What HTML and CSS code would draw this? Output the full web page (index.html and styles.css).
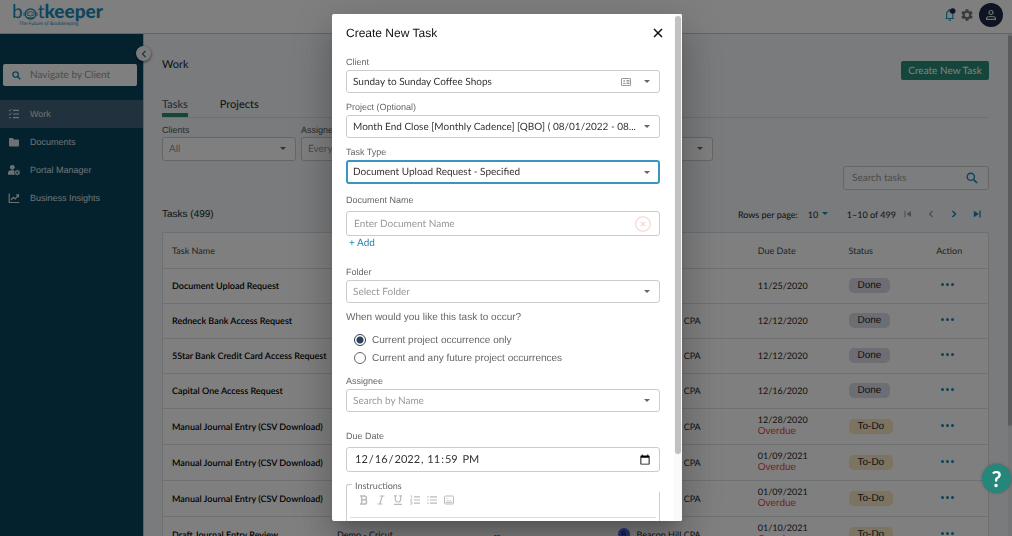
FILE: index.html
```html
<!DOCTYPE html>
<html lang="en">
<head>
<meta charset="utf-8">
<title>Botkeeper - Work</title>
<link rel="stylesheet" href="styles.css">
</head>
<body>
<div class="app">
  <header class="topbar">
    <a class="logo" href="#">
      <span class="logo-word"><span class="logo-thin">b</span><svg class="logo-bot" viewBox="0 0 15 12"><ellipse cx="7.500" cy="6" rx="5.400" ry="5" fill="none" stroke="currentColor" stroke-width="1.300"/><path d="M1 4.500v3.500M14 4.500v3.500M4 4.500q3.500-2 7 0v2.500q-3.500 2-7 0z" fill="none" stroke="currentColor" stroke-width=".9"/><path d="M5.500 5.800h1M8.500 5.800h1M4.500 9.500q3 1 6 0" stroke="currentColor" stroke-width="1" fill="none"/></svg><span class="logo-thin">t</span><span class="logo-bold">keeper</span></span>
      <span class="logo-tag">The Future of Bookkeeping</span>
    </a>
    <div class="top-actions">
      <button class="icon-btn bell" aria-label="Notifications"><svg viewBox="0 0 12 14" width="12" height="14"><path d="M1.500 10.500h8.500M2.600 10.300V6.300a3.100 3.400 0 0 1 6.200 0v4M4.800 2.700v-.8h1.700M4.600 12.200h2.300" fill="none" stroke="#1fa0bd" stroke-width="1.200"/><circle cx="8.700" cy="3" r="2.800" fill="#1f2a4a"/></svg></button>
      <button class="icon-btn" aria-label="Settings"><svg viewBox="2 2 20 20" width="12" height="12"><path fill="#777" d="M19.140 12.940c.04-.3.060-.610.060-.940s-.020-.640-.070-.940l2.030-1.580a.49.49 0 0 0 .12-.610l-1.920-3.320a.49.49 0 0 0-.590-.220l-2.390.960a7 7 0 0 0-1.620-.940l-.360-2.540a.48.48 0 0 0-.480-.410h-3.840a.48.48 0 0 0-.470.410l-.360 2.540a7.300 7.300 0 0 0-1.620.940l-2.390-.960a.48.48 0 0 0-.590.220L2.740 8.870a.48.48 0 0 0 .12.610l2.030 1.580a6 6 0 0 0 0 1.880l-2.030 1.580a.49.49 0 0 0-.12.610l1.920 3.320c.12.220.37.290.59.220l2.390-.960c.5.380 1.030.700 1.620.940l.36 2.540c.05.240.24.410.48.410h3.840c.24 0 .44-.170.47-.410l.36-2.540a7 7 0 0 0 1.620-.940l2.390.960c.22.080.47 0 .59-.220l1.920-3.320a.48.48 0 0 0-.12-.610zM12 15.600a3.600 3.600 0 1 1 0-7.200 3.600 3.600 0 0 1 0 7.200z"/></svg></button>
      <button class="avatar" aria-label="Account"><svg viewBox="0 0 12 12" width="12" height="12" fill="none" stroke="#dfe3ea" stroke-width="1.200"><circle cx="6" cy="3.500" r="2"/><path d="M1.600 10.400V9.200C1.600 6.900 10.400 6.900 10.400 9.200v1.200z"/></svg></button>
    </div>
  </header>
  <div class="layout">
    <nav class="sidebar">
      <button class="collapse" aria-label="Collapse menu"><svg viewBox="0 0 8 8" width="8" height="8"><path d="M5.500 1 2.500 4l3 3" fill="none" stroke="#1b6f96" stroke-width="1.200"/></svg></button>
      <label class="client-search">
        <svg viewBox="0 0 10 10" width="9" height="9"><circle cx="4" cy="4" r="3" fill="none" stroke="#1b85b8" stroke-width="1.400"/><path d="m6.200 6.200 3 3" stroke="#1b85b8" stroke-width="1.700"/></svg>
        <input type="text" placeholder="Navigate by Client" aria-label="Navigate by Client">
      </label>
      <a class="nav-item active" href="#"><svg viewBox="0 0 12 12"><path d="M5 2.300h6M5 6h6M5 9.700h6" stroke="currentColor" stroke-width="1.200"/><path d="m.8 2.200 1 1L3.500 1M.8 5.900l1 1 1.700-2.200" fill="none" stroke="currentColor" stroke-width=".9"/><circle cx="2" cy="9.700" r=".8" fill="currentColor"/></svg>Work</a>
      <a class="nav-item" href="#"><svg viewBox="0 0 12 12"><path d="M1 3a1 1 0 0 1 1-1h2.800l1.300 1.400H10a1 1 0 0 1 1 1V9.500a1 1 0 0 1-1 1H2a1 1 0 0 1-1-1z" fill="currentColor"/></svg>Documents</a>
      <a class="nav-item" href="#"><svg viewBox="0 0 12 12"><circle cx="4.300" cy="3.300" r="2.400" fill="currentColor"/><path d="M0 10.800V9.200c0-2 1.500-2.900 3-2.900h2.300c.6 0 1 .2 1.300.4-.8 1.500-.4 3.100.8 4.100z" fill="currentColor"/><circle cx="9.300" cy="8.500" r="1.700" fill="none" stroke="currentColor" stroke-width="1.300"/><path d="M9.300 5.700v1M9.300 10.300v1M6.900 7.100l.8.500M10.900 9.400l.8.500M6.900 9.900l.8-.5M10.900 7.600l.8-.5" stroke="currentColor"/></svg>Portal Manager</a>
      <a class="nav-item" href="#"><svg viewBox="0 0 12 12"><path d="M1.200 1.500v9h10M3 8l2.300-2.600 1.900 1.500 3-3.600M8.200 2.900h2.300v2.300" fill="none" stroke="currentColor" stroke-width="1.200"/></svg>Business Insights</a>
    </nav>
    <main class="main">
      <div class="page-head"><h1>Work</h1><button class="primary">Create New Task</button></div>
      <div class="tabs"><a class="tab current" href="#">Tasks</a><a class="tab" href="#">Projects</a></div>
      <div class="filters">
        <div class="filter"><label for="f1">Clients</label><div class="select"><select id="f1" class="muted"><option>All</option></select></div></div>
        <div class="filter"><label for="f2">Assignee</label><div class="select"><select id="f2" class="muted"><option>Everyone</option></select></div></div>
        <div class="filter"><label for="f3">Status</label><div class="select"><select id="f3" class="muted"><option>All</option></select></div></div>
        <div class="filter"><label for="f4">Type</label><div class="select"><select id="f4" class="muted"><option>All</option></select></div></div>
      </div>
      <label class="task-search"><input type="text" placeholder="Search tasks" aria-label="Search tasks"><svg viewBox="0 0 12 12" width="12" height="12"><circle cx="4.800" cy="4.800" r="3.600" fill="none" stroke="#1b85b8" stroke-width="1.400"/><path d="m7.500 7.500 3.500 3.500" stroke="#1b85b8" stroke-width="1.700"/></svg></label>
      <div class="list-head">
        <h2>Tasks (499)</h2>
        <div class="pager">
          <label for="rows">Rows per page:</label>
          <div class="select rows"><select id="rows"><option>10</option></select></div>
          <span class="range">1–10 of 499</span>
          <button class="page-btn off" aria-label="First page"><svg viewBox="0 0 8 8"><path d="M1 .8v6.400" stroke="currentColor"/><path d="M7 1v6L2.500 4z" fill="currentColor"/></svg></button>
          <button class="page-btn off" aria-label="Previous page"><svg viewBox="0 0 8 8"><path d="M5.500 1 2.500 4l3 3" fill="none" stroke="currentColor" stroke-width="1.100"/></svg></button>
          <button class="page-btn" aria-label="Next page"><svg viewBox="0 0 8 8"><path d="m2.500 1 3 3-3 3" fill="none" stroke="currentColor" stroke-width="1.500"/></svg></button>
          <button class="page-btn" aria-label="Last page"><svg viewBox="0 0 8 8"><path d="M7 .6v6.800" stroke="currentColor" stroke-width="1.300"/><path d="M.8.7v6.600L6 4z" fill="currentColor"/></svg></button>
        </div>
      </div>
      <div class="table-card">
      <table>
        <colgroup><col class="c-name"><col class="c-client"><col class="c-project"><col class="c-who"><col class="c-due"><col class="c-status"><col class="c-action"></colgroup>
        <thead><tr><th>Task Name</th><th>Client</th><th>Project</th><th>Assignee</th><th>Due Date</th><th>Status</th><th>Action</th></tr></thead>
        <tbody>
        <tr><td class="name">Document Upload Request</td><td></td><td></td><td></td><td>11/25/2020</td><td><span class="chip">Done</span></td><td><button class="more" aria-label="Actions"><i></i><i></i><i></i></button></td></tr>
        <tr><td class="name">Redneck Bank Access Request</td><td></td><td></td><td><span class="who"><b>B</b>Beacon Hill CPA</span></td><td>12/12/2020</td><td><span class="chip">Done</span></td><td><button class="more" aria-label="Actions"><i></i><i></i><i></i></button></td></tr>
        <tr><td class="name">5Star Bank Credit Card Access Request</td><td></td><td></td><td><span class="who"><b>B</b>Beacon Hill CPA</span></td><td>12/12/2020</td><td><span class="chip">Done</span></td><td><button class="more" aria-label="Actions"><i></i><i></i><i></i></button></td></tr>
        <tr><td class="name">Capital One Access Request</td><td></td><td></td><td><span class="who"><b>B</b>Beacon Hill CPA</span></td><td>12/16/2020</td><td><span class="chip">Done</span></td><td><button class="more" aria-label="Actions"><i></i><i></i><i></i></button></td></tr>
        <tr class="late"><td class="name">Manual Journal Entry (CSV Download)</td><td></td><td></td><td><span class="who"><b>B</b>Beacon Hill CPA</span></td><td>12/28/2020<span class="overdue">Overdue</span></td><td><span class="chip todo">To-Do</span></td><td><button class="more" aria-label="Actions"><i></i><i></i><i></i></button></td></tr>
        <tr class="late"><td class="name">Manual Journal Entry (CSV Download)</td><td></td><td></td><td><span class="who"><b>B</b>Beacon Hill CPA</span></td><td>01/09/2021<span class="overdue">Overdue</span></td><td><span class="chip todo">To-Do</span></td><td><button class="more" aria-label="Actions"><i></i><i></i><i></i></button></td></tr>
        <tr class="late"><td class="name">Manual Journal Entry (CSV Download)</td><td></td><td></td><td><span class="who"><b>B</b>Beacon Hill CPA</span></td><td>01/09/2021<span class="overdue">Overdue</span></td><td><span class="chip todo">To-Do</span></td><td><button class="more" aria-label="Actions"><i></i><i></i><i></i></button></td></tr>
        <tr class="late"><td class="name">Draft Journal Entry Review</td><td>Demo - Cricut</td><td>--</td><td><span class="who"><b>B</b>Beacon Hill CPA</span></td><td>01/10/2021<span class="overdue">Overdue</span></td><td><span class="chip todo">To-Do</span></td><td><button class="more" aria-label="Actions"><i></i><i></i><i></i></button></td></tr>
        </tbody>
      </table>
      </div>
    </main>
    <div class="page-scroll"><div class="page-thumb"></div></div>
  </div>
</div>

<div class="backdrop">
  <section class="modal" role="dialog" aria-labelledby="dlg-title">
    <form class="modal-body">
      <div class="modal-head"><h2 id="dlg-title">Create New Task</h2><button type="button" class="close" aria-label="Close"><svg viewBox="0 0 10 10" width="10" height="10"><path d="m1 1 8 8M9 1 1 9" stroke="#111" stroke-width="1.500"/></svg></button></div>
      <div class="field"><label for="client">Client</label><div class="select"><select id="client"><option>Sunday to Sunday Coffee Shops</option></select><svg class="card-icon" viewBox="0 0 10 8" width="10" height="8" fill="none" stroke="#999"><rect x=".5" y=".5" width="9" height="7" rx=".5"/><path d="M5.500 2.500H8.500M5.500 4H8.500M5.500 5.500H8.500M2 5.500h2.500"/><circle cx="3.200" cy="3" r=".6"/></svg></div></div>
      <div class="field"><label for="project">Project (Optional)</label><div class="select"><select id="project"><option>Month End Close [Monthly Cadence] [QBO] ( 08/01/2022 - 08...</option></select></div></div>
      <div class="field"><label for="type">Task Type</label><div class="select focused"><select id="type"><option>Document Upload Request - Specified</option></select></div></div>
      <div class="field spaced doc"><label for="doc">Document Name</label>
        <div class="textbox"><input id="doc" type="text" placeholder="Enter Document Name"><button type="button" class="remove" aria-label="Remove"><svg viewBox="0 0 16 16" width="16" height="16" fill="none" stroke="#fbd0d0" stroke-width="1.100"><circle cx="8" cy="8" r="7.300"/><path d="m5.800 5.800 4.400 4.400M10.200 5.800l-4.400 4.400"/></svg></button></div>
      </div>
      <button type="button" class="add">+ Add</button>
      <div class="field folder"><label for="folder">Folder</label><div class="select"><select id="folder" class="muted"><option>Select Folder</option></select></div></div>
      <fieldset class="when">
        <legend>When would you like this task to occur?</legend>
        <label><input type="radio" name="when" checked>Current project occurrence only</label>
        <label><input type="radio" name="when">Current and any future project occurrences</label>
      </fieldset>
      <div class="field"><label for="assignee">Assignee</label><div class="select"><select id="assignee" class="muted"><option>Search by Name</option></select></div></div>
      <div class="field spaced due"><label for="due">Due Date</label><div class="textbox"><input id="due" type="datetime-local" value="2022-12-16T23:59"></div></div>
      <div class="editor">
        <div class="editor-top"><span class="corner"></span><span class="editor-label">Instructions</span></div>
        <div class="editor-body">
          <div class="tools">
            <button type="button" aria-label="Bold"><svg viewBox="0 0 10 10"><path d="M1 1h4.500a1.900 1.900 0 0 1 0 3.800H2.700M5.500 4.800a2.100 2.100 0 0 1 0 4.200H1M2.700 1v8" fill="none" stroke="currentColor" stroke-width="1.500"/></svg></button>
            <button type="button" aria-label="Italic"><svg viewBox="0 0 10 10"><path d="M3.500 1h5M1.500 9h5M6.300 1 3.800 9" fill="none" stroke="currentColor" stroke-width="1.200"/></svg></button>
            <button type="button" aria-label="Underline"><svg viewBox="0 0 10 10"><path d="M1 .8h2.800M6.200.8H9M2.300.8V4.500c0 3.300 5.400 3.300 5.400 0V.8M1 9.300h8" fill="none" stroke="currentColor" stroke-width="1.200"/></svg></button>
            <button type="button" aria-label="Numbered list"><svg viewBox="0 0 10 10"><path d="M4 1.800h6M4 5h6M4 8.200h6" stroke="currentColor" stroke-width="1.200"/><path d="M.5 1 1.500.5V3.500M.3 4.500h1.700L.4 6.200h1.800M.3 7.300h1.600v2H.3M.8 8.300h1" fill="none" stroke="currentColor" stroke-width=".7"/></svg></button>
            <button type="button" aria-label="Bulleted list"><svg viewBox="0 0 10 10"><path d="M3 1.800h7M3 5h7M3 8.200h7M.2 1.800h1.400M.2 5h1.400M.2 8.200h1.400" stroke="currentColor" stroke-width="1.200"/></svg></button>
            <button type="button" aria-label="Image"><svg viewBox="0 0 10 10"><rect x=".5" y="1" width="9" height="8" rx="1" fill="none" stroke="currentColor"/><path d="m2 7.500 2-2.500 1.500 1.500 1-1L8 7.500z" fill="none" stroke="currentColor" stroke-width=".8"/><circle cx="3" cy="3.300" r=".6" fill="currentColor"/></svg></button>
          </div>
        </div>
      </div>
    </form>
    <div class="modal-scroll"><div class="modal-thumb"></div></div>
  </section>
</div>
<button class="help" aria-label="Help">?</button>
</body>
</html>
```
FILE: styles.css
```css
* { box-sizing: border-box; }
body { margin: 0; font-family: Lato, sans-serif; font-size: 10px; color: #222; text-rendering: geometricPrecision; }
button, input, select { font: inherit; color: inherit; margin: 0; padding: 0; border: 0; background: none; outline: 0; text-rendering: inherit; }
h1, h2 { margin: 0; font-weight: 400; }
a { color: inherit; text-decoration: none; }
svg { display: block; flex: none; }
input::placeholder { color: #999; opacity: 1; }

.app { display: flex; flex-direction: column; height: 100vh; overflow: hidden; }

.topbar { display: flex; flex: none; justify-content: space-between; height: 34px; padding: 3px 9px 3px 12px; border-bottom: 1px solid #c6c8cc; background: #fff; }
.logo { display: flex; flex-direction: column; color: #1b8abb; }
.logo-word { display: flex; align-items: center; height: 18px; font-size: 19px; line-height: 18px; }
.logo-bold { font-weight: 900; }
.logo-bot { width: 15px; height: 12px; margin-top: 4px; }
.logo-tag { padding-left: 7px; font-size: 5px; line-height: 6px; }
.top-actions { display: flex; align-items: center; height: 24px; gap: 5px; }
.icon-btn { display: flex; }
.avatar { display: flex; align-items: center; justify-content: center; width: 24px; height: 24px; margin-left: 1px; border-radius: 50%; background: #1c2a42; }

.layout { display: flex; flex: 1; min-height: 0; }
.sidebar { position: relative; flex: none; width: 144px; padding-top: 30px; border-right: 1px solid #b9c4cc; background: #09435c; font-family: "Liberation Sans", Arial, sans-serif; font-size: 9px; }
.collapse { position: absolute; top: 12px; right: -8px; display: flex; align-items: center; justify-content: center; width: 15px; height: 15px; border-radius: 50%; background: #f6f7f9; box-shadow: 0 1px 3px rgba(0, 0, 0, .6); }
.client-search { display: flex; align-items: center; gap: 9px; height: 22px; margin: 0 6px 14px 3px; padding: 0 9px; border-radius: 2px; background: #fff; font-family: Lato, sans-serif; font-size: 10px; }
.client-search input { flex: 1; min-width: 0; }
.nav-item { display: flex; align-items: center; gap: 10px; height: 28px; padding-left: 8px; color: #dbe3e8; }
.nav-item svg { width: 12px; height: 12px; }
.nav-item.active { background: #42657c; }

.main { flex: 1; min-width: 0; padding: 22px 19px 0 18px; background: #f3f6fa; }
.page-head { display: flex; align-items: flex-start; justify-content: space-between; height: 37px; }
.page-head h1 { font-size: 11px; line-height: 18px; }
.primary { width: 88px; height: 19px; margin-top: 5px; border-radius: 2px; background: #298c79; color: #fff; font-size: 10px; }
.tabs { display: flex; gap: 32px; height: 25px; border-bottom: 1px solid #dcdee2; font-size: 11px; line-height: 23px; }
.tab.current { height: 24px; border-bottom: 4px solid #298c79; color: #3d5266; }
.filters { display: flex; gap: 5px; padding-top: 6px; }
.filter { width: 134px; color: #555; }
.filter label, .field label { display: block; font-family: "Liberation Sans", Arial, sans-serif; font-size: 9px; line-height: 12px; }

.select { position: relative; height: 23px; border: 1px solid #ccc; border-radius: 3px; background: #fff; }
.select select { display: block; width: 100%; height: 100%; padding: 0 20px 0 6px; appearance: none; }
.select .muted { color: #999; }
.select::after { position: absolute; top: 9px; right: 9px; border: 3px solid transparent; border-top-color: #666; border-bottom: 0; content: ""; }
.filter .select { height: 24px; margin-top: 1px; }

.task-search { display: flex; align-items: center; width: 146px; height: 24px; margin: 5px 0 0 auto; padding: 0 10px 0 8px; border: 1px solid #ccc; border-radius: 3px; background: #f8fafc; }
.task-search input { flex: 1; min-width: 0; }
.list-head { display: flex; align-items: center; justify-content: space-between; height: 42px; padding-top: 6px; }
.list-head h2 { font-family: "Liberation Sans", Arial, sans-serif; font-size: 10px; }
.pager { display: flex; align-items: center; padding-right: 8px; font-size: 9px; }
.select.rows { width: 20px; height: 14px; margin: 0 19px 0 10px; border: 0; background: none; }
.select.rows select { padding: 0; }
.select.rows::after { top: 5px; right: 0; border-top-color: #1b85b8; }
.range { margin-right: 8px; }
.page-btn { width: 8px; height: 8px; color: #1b85b8; }
.page-btn + .page-btn { margin-left: 15px; }
.page-btn.off { color: #999; }

.table-card { border: 1px solid #dcdee0; border-radius: 2px; background: #fff; }
table { width: 100%; border-collapse: collapse; table-layout: fixed; font-size: 9px; }
.c-name { width: 20%; }
.c-client { width: 19%; }
.c-project { width: 15%; }
.c-who { width: 17%; }
.c-due { width: 11%; }
.c-status { width: 11%; }
.c-action { width: 7%; }
tr { height: 35px; }
tr.late { height: 36px; }
th, td { padding: 0 0 0 9px; border-bottom: 1px solid #dfe0e2; font-weight: 400; line-height: 11px; text-align: left; white-space: nowrap; }
th { color: #444; }
th:last-child, td:last-child { padding-left: 6px; }
.name { color: #000; font-weight: 600; }
.overdue { display: block; color: #e04848; font-family: "Liberation Sans", Arial, sans-serif; font-size: 10px; line-height: 13px; }
.chip { display: inline-block; padding: 0 9px; border-radius: 5px; background: #dadde8; font-family: "Liberation Sans", Arial, sans-serif; font-size: 10px; line-height: 15px; }
.chip.todo { background: #f8e6c2; }
.more { display: flex; gap: 2px; margin: 0 0 2px 5px; }
.more i { width: 3px; height: 3px; border-radius: 50%; background: #1b85b8; }
.who { display: flex; align-items: center; gap: 7px; }
.who b { width: 12px; height: 12px; border-radius: 50%; background: #4a6cf0; color: #111; font-size: 8px; font-weight: 400; line-height: 12px; text-align: center; }
.page-scroll { flex: none; width: 4px; padding-top: 1px; background: #e9ebee; }
.page-thumb { height: 78%; background: #b5b7ba; border-radius: 2px; }

.backdrop { position: fixed; inset: 0; display: flex; justify-content: center; padding: 14px 0 15px 2px; background: rgba(0, 0, 0, .5); }
.modal { display: flex; width: 350px; overflow: hidden; border-radius: 2px; background: #fff; color: #333; box-shadow: 0 11px 15px -7px rgba(0, 0, 0, .2), 0 24px 38px 3px rgba(0, 0, 0, .14), 0 9px 46px 8px rgba(0, 0, 0, .12); }
.modal-body { flex: 1; min-width: 0; padding: 12px 14px 0; }
.modal-head { display: flex; align-items: center; justify-content: space-between; height: 14px; margin-bottom: 16px; }
.modal-head h2 { color: #111; font-family: "Liberation Sans", Arial, sans-serif; font-size: 12px; line-height: 14px; }
.close { margin-right: -3px; }
.field { display: flex; flex-direction: column; gap: 2px; margin-bottom: 8px; }
.field label { color: #666; }
.field .select.focused { height: 24px; border: 2px solid #3a95c0; }
.field .focused select { padding-left: 5px; }
.field .focused::after { top: 9px; right: 8px; }
.card-icon { position: absolute; top: 7px; right: 28px; }
.field.spaced { gap: 5px; }
.field.doc { margin: 10px 0 0; }
.textbox { display: flex; align-items: center; height: 25px; padding: 0 8px 0 7px; border: 1px solid #ccc; border-radius: 3px; }
.textbox input { flex: 1; min-width: 0; }
.add { display: block; margin-left: 3px; color: #2585b3; line-height: 15px; }
.field.folder { margin-top: 15px; }
.when { margin: 0 0 8px; padding: 0; border: 0; color: #666; font-family: "Liberation Sans", Arial, sans-serif; font-size: 10px; }
.when legend { padding: 0; margin-bottom: 6px; line-height: 14px; }
.when label { display: flex; align-items: center; gap: 6px; height: 18px; padding-left: 8px; }
.when input { width: 12px; height: 12px; border: 1px solid #666; border-radius: 50%; appearance: none; }
.when input:checked { border-color: #2c405a; background: radial-gradient(circle, #2c405a 3px, transparent 4px); }
.field.due { margin: 18px 0 12px; }
.due input { font-size: 11px; }
.due input::-webkit-calendar-picker-indicator { width: 12px; height: 12px; margin: 0; padding: 0; }
.editor-top { position: relative; display: flex; height: 8px; }
.corner { width: 6px; border: 1px solid #ccc; border-width: 1px 0 0 1px; border-radius: 3px 0 0 0; }
.editor-label { padding-left: 3px; margin-top: -4px; color: #666; font-size: 9px; line-height: 12px; }
.editor-body { height: 60px; padding: 3px 3px 0; border: 1px solid #ccc; border-width: 0 1px; }
.tools { display: flex; gap: 7px; height: 23px; padding: 0 0 0 9px; border-bottom: 1px solid #ddd; color: #bbb; }
.tools button { width: 10px; height: 10px; }
.modal-scroll { flex: none; width: 8px; padding: 2px 1px; background: #fafafa; }
.modal-thumb { height: 87%; border-radius: 3px; background: #c1c1c1; }
.help { position: fixed; right: 1px; bottom: 43px; width: 29px; height: 29px; border-radius: 50%; background: #25877a; color: #fff; font-size: 22px; font-weight: 700; line-height: 29px; box-shadow: 0 0 3px rgba(0, 0, 0, .3); }
```
